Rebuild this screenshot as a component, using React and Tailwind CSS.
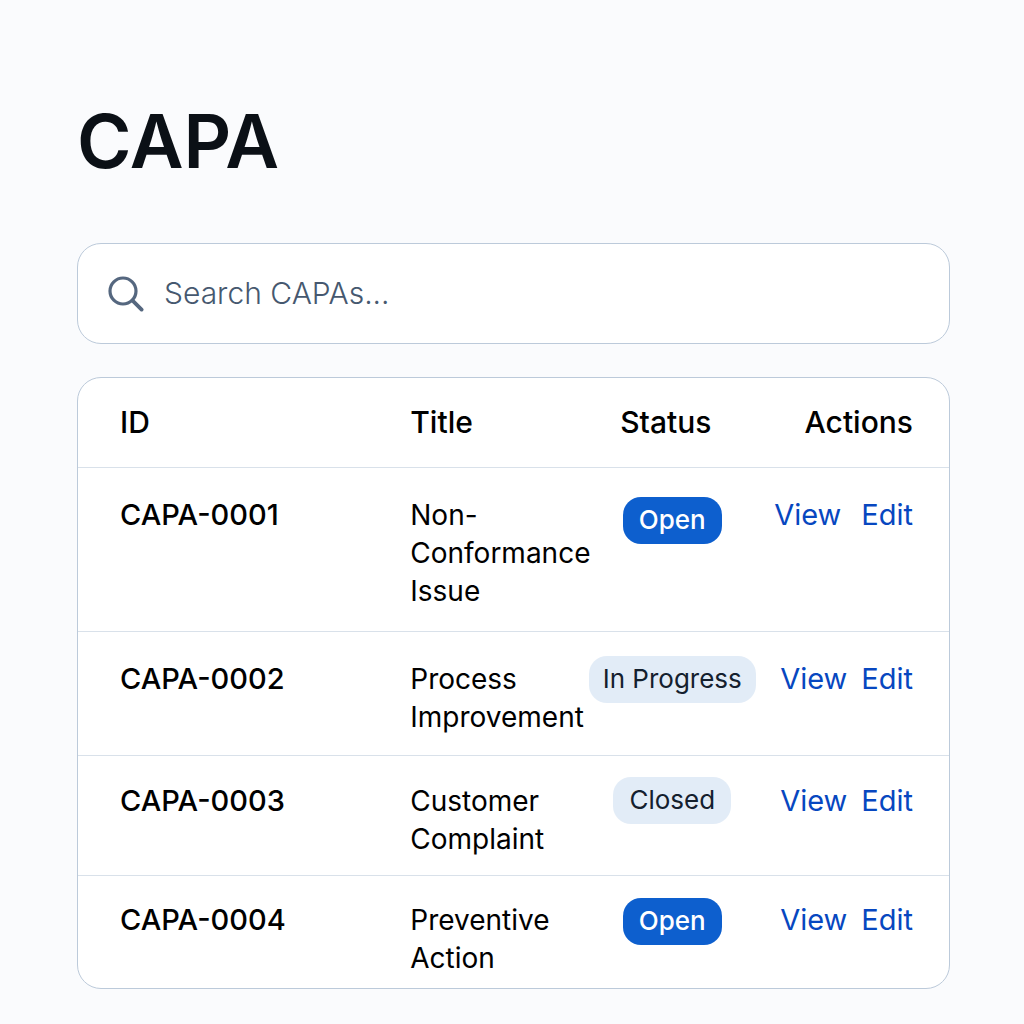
const rows = [
  { id: "CAPA-0001", title: "Non-Conformance Issue", status: "Open", row: "h-[164px]", top: "pt-7", pill: "mt-[29px]", gap: "gap-5" },
  { id: "CAPA-0002", title: "Process Improvement", status: "In Progress", row: "h-[124px]", top: "pt-7", pill: "mt-6", gap: "gap-[14px]" },
  { id: "CAPA-0003", title: "Customer Complaint", status: "Closed", row: "h-[120px]", top: "pt-[26px]", pill: "mt-[21px]", gap: "gap-[14px]" },
  { id: "CAPA-0004", title: "Preventive Action", status: "Open", row: "h-[113px]", top: "pt-[25px]", pill: "mt-[22px]", gap: "gap-[14px]" },
];

const pillStyles = {
  Open: "bg-[#0d5fce] px-4 font-medium text-white",
  "In Progress": "bg-[#e2ecf7] px-[14px] text-[#14202e]",
  Closed: "bg-[#e2ecf7] px-4 text-[#14202e]",
};

function StatusPill({ status }) {
  return (
    <span className={`inline-flex h-[47px] items-center rounded-[18px] text-[26px] whitespace-nowrap ${pillStyles[status]}`}>
      {status}
    </span>
  );
}

function SearchBox() {
  return (
    <label className="mt-[65px] flex h-[101px] items-center rounded-3xl border border-[#bccada] bg-white pr-8 pl-[30px]">
      <svg className="size-9 shrink-0 text-[#55677f]" viewBox="0 0 36 36" fill="none" stroke="currentColor" strokeLinecap="round" aria-hidden="true">
        <circle cx="15" cy="15" r="13" strokeWidth="3.2" />
        <path d="M24.6 24.6 33.6 33.6" strokeWidth="3.8" />
      </svg>
      <input type="search" aria-label="Search CAPAs" placeholder="Search CAPAs..." className="ml-5 min-w-0 flex-1 bg-transparent text-[30px] font-light text-black outline-none placeholder:text-[#46586f]" />
    </label>
  );
}

export default function App() {
  return (
    <main className="min-h-screen bg-[#fafbfd] pt-[104px] pr-[74px] pb-[34px] pl-[77px] font-['Inter',sans-serif] text-black">
      <h1 className="text-[74px] leading-[74px] font-semibold text-[#0b1016]">CAPA</h1>
      <SearchBox />
      <div className="mt-[33px] overflow-hidden rounded-3xl border border-[#bccada] bg-white">
        <table className="w-full table-fixed border-collapse text-[29px] leading-[38px]">
          <colgroup>
            <col className="w-[37%]" />
            <col className="w-[21%]" />
            <col className="w-[20%]" />
            <col className="w-[22%]" />
          </colgroup>
          <thead>
            <tr className="h-[89px] border-b border-[#d9e1ea] text-left text-[30px]">
              <th className="pl-[42px] font-medium">ID</th>
              <th className="pl-[10px] font-medium">Title</th>
              <th className="pl-[37px] font-medium">Status</th>
              <th className="pr-9 text-right font-medium">Actions</th>
            </tr>
          </thead>
          <tbody>
            {rows.map((r) => (
              <tr key={r.id} className={`${r.row} border-b border-[#d9e1ea] align-top last:border-b-0`}>
                <td className={`pl-[42px] font-medium ${r.top}`}>{r.id}</td>
                <td className={`pl-[10px] text-[28px] ${r.top}`}>{r.title}</td>
                <td className="pl-1">
                  <div className={`flex justify-center ${r.pill}`}>
                    <StatusPill status={r.status} />
                  </div>
                </td>
                <td className={`pr-9 ${r.top}`}>
                  <div className={`flex justify-end text-[#0747c0] ${r.gap}`}>
                    <a href="#view">View</a>
                    <a href="#edit">Edit</a>
                  </div>
                </td>
              </tr>
            ))}
          </tbody>
        </table>
      </div>
    </main>
  );
}
